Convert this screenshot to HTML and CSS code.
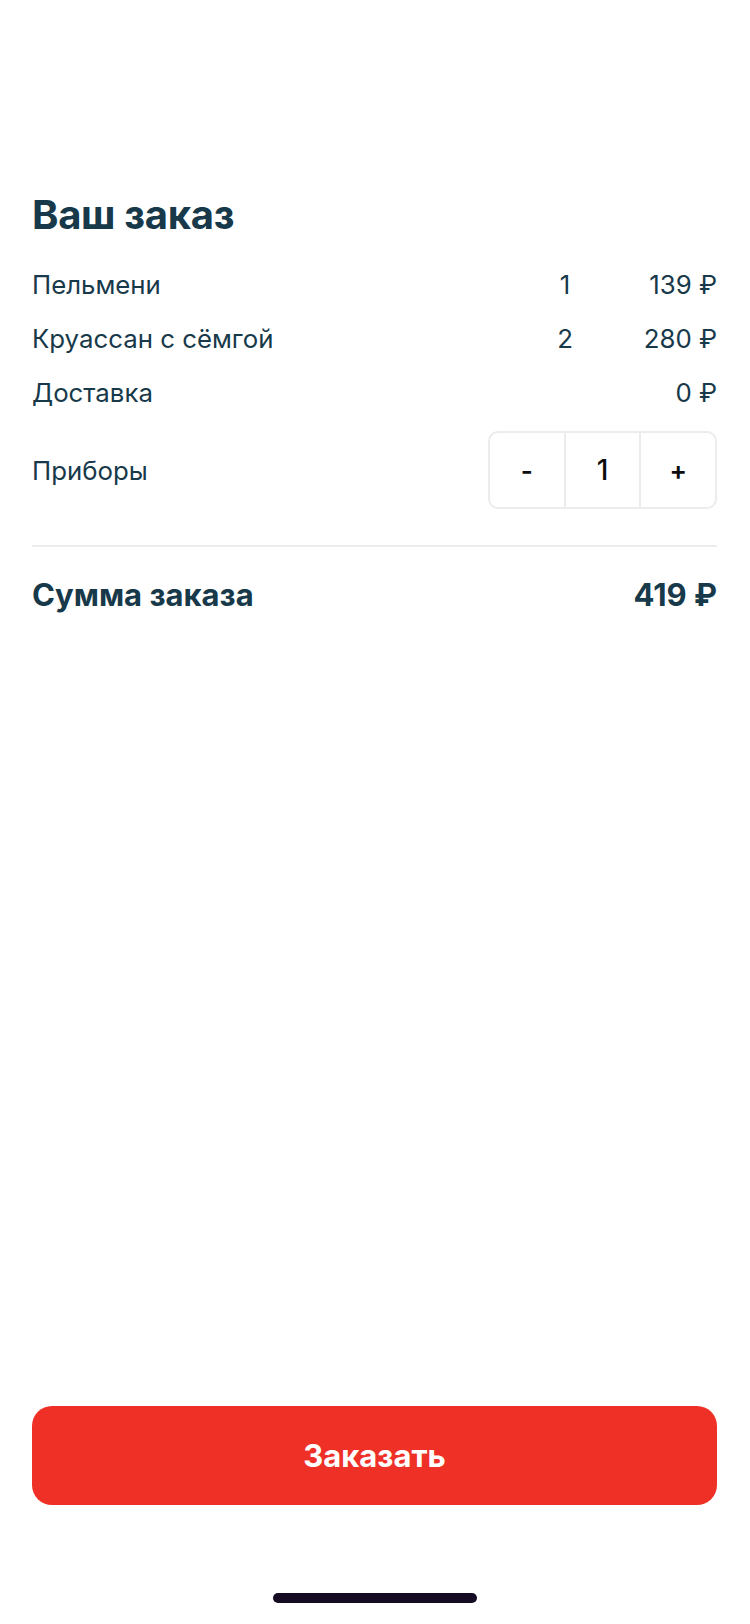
FILE: index.html
```html
<!DOCTYPE html>
<html lang="ru">
<head>
<meta charset="utf-8">
<title>Ваш заказ</title>
<link rel="stylesheet" href="styles.css">
</head>
<body>
<div class="screen">
  <main class="order">
    <h1 class="title">Ваш заказ</h1>
    <div class="line">
      <span class="name">Пельмени</span>
      <span class="qty">1</span>
      <span class="price">139 ₽</span>
    </div>
    <div class="line">
      <span class="name">Круассан с сёмгой</span>
      <span class="qty">2</span>
      <span class="price">280 ₽</span>
    </div>
    <div class="line">
      <span class="name">Доставка</span>
      <span class="qty"></span>
      <span class="price">0 ₽</span>
    </div>
    <div class="cutlery">
      <span class="name">Приборы</span>
      <div class="stepper">
        <button class="step">-</button>
        <span class="step step-value">1</span>
        <button class="step">+</button>
      </div>
    </div>
    <div class="divider"></div>
    <div class="total">
      <span>Сумма заказа</span>
      <span>419 ₽</span>
    </div>
  </main>
  <footer class="bottom">
    <button class="submit">Заказать</button>
    <div class="home-area"><div class="home-indicator"></div></div>
  </footer>
</div>
</body>
</html>
```
FILE: styles.css
```css
* { box-sizing: border-box; }
html, body { margin: 0; padding: 0; background: #ffffff; }
body {
  font-family: Inter, "Noto Sans", sans-serif;
  color: #17394a;
}
.screen {
  width: 750px;
  height: 1624px;
  display: flex;
  flex-direction: column;
  padding: 0 33px 0 32px;
}
.order {
  padding-top: 192px;
  display: flex;
  flex-direction: column;
}
.title {
  margin: 0 0 19px;
  font-size: 40px;
  line-height: 46px;
  font-weight: 700;
  letter-spacing: -0.3px;
}
.line {
  display: grid;
  grid-template-columns: 1fr 76px 114px;
  height: 54px;
  align-items: center;
  font-size: 25.8px;
  font-weight: 400;
}
.qty { text-align: center; }
.price { text-align: right; }
.cutlery {
  margin-top: 12px;
  display: flex;
  justify-content: space-between;
  align-items: center;
  font-size: 25.8px;
}
.stepper {
  display: flex;
  width: 229px;
  height: 78px;
  border: 2px solid #ececec;
  border-radius: 10px;
}
.step {
  flex: 1;
  display: flex;
  align-items: center;
  justify-content: center;
  border: 0;
  background: transparent;
  padding: 0;
  font-family: Inter, sans-serif;
  font-size: 26px;
  font-weight: 600;
  color: #0d0d0d;
}
.step-value {
  border-left: 2px solid #ececec;
  border-right: 2px solid #ececec;
  font-weight: 500;
  font-size: 28px;
}
.divider {
  margin-top: 36px;
  height: 2px;
  background: #ececec;
}
.total {
  margin-top: 22px;
  display: flex;
  justify-content: space-between;
  align-items: center;
  height: 50px;
  font-size: 31px;
  font-weight: 700;
}
.bottom {
  margin-top: auto;
  display: flex;
  flex-direction: column;
}
.submit {
  height: 99px;
  border: 0;
  border-radius: 20px;
  background: #ef3026;
  color: #ffffff;
  font-family: Inter, sans-serif;
  font-size: 31px;
  font-weight: 700;
}
.home-area {
  height: 119px;
  display: flex;
  justify-content: center;
  padding-top: 88px;
}
.home-indicator {
  width: 204px;
  height: 10px;
  border-radius: 5px;
  background: #150c24;
}
```
